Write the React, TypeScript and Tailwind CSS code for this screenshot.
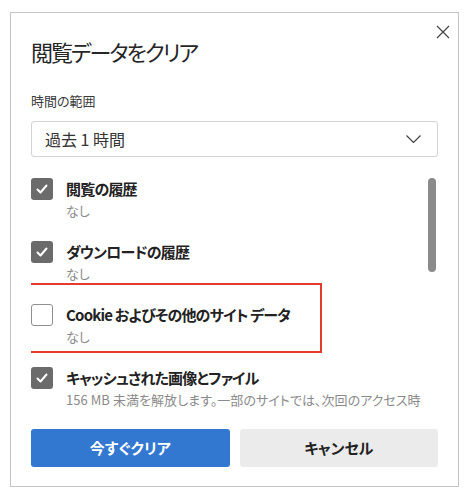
const jp = "font-['Noto_Sans_CJK_JP',sans-serif] [font-feature-settings:'palt']";

type Item = { label: string; sub: string; checked: boolean; marked?: boolean };

const items: Item[] = [
  { label: '閲覧の履歴', sub: 'なし', checked: true },
  { label: 'ダウンロードの履歴', sub: 'なし', checked: true },
  { label: 'Cookie およびその他のサイト データ', sub: 'なし', checked: false, marked: true },
  {
    label: 'キャッシュされた画像とファイル',
    sub: '156 MB 未満を解放します。一部のサイトでは、次回のアクセス時に読み込みが遅くなる可能性があります。',
    checked: true,
  },
];

function Check({ on }: { on: boolean }) {
  if (!on) {
    return <span className="block w-[22px] h-[22px] shrink-0 rounded-[3px] border border-[#8f8f8f] bg-white" />;
  }
  return (
    <span className="flex w-[22px] h-[22px] shrink-0 items-center justify-center rounded-[3px] bg-[#6b6b6b]">
      <svg width="14" height="14" viewBox="0 0 14 14" fill="none" stroke="white" strokeWidth="2" strokeLinecap="round" strokeLinejoin="round">
        <path d="M2.5 7.5l3 3 6-7" />
      </svg>
    </span>
  );
}

export default function App() {
  return (
    <div className={`min-h-[498px] bg-white pt-[12px] pl-[10px] ${jp}`}>
      <div className="relative w-[449px] h-[475px] border border-[#c4c4c4] px-[20px] pt-[24px] pb-[19px] flex flex-col">
        {/* close */}
        <button className="absolute top-[12px] right-[8px] w-[14px] h-[14px] text-[#444]" aria-label="閉じる">
          <svg width="14" height="14" viewBox="0 0 14 14" fill="none" stroke="currentColor" strokeWidth="1.2">
            <path d="M1 1l12 12M13 1L1 13" />
          </svg>
        </button>

        <h1 className="text-[22px] leading-[28px] tracking-[-2px] text-[#262626]">閲覧データをクリア</h1>

        <div className="mt-[26px] text-[13px] leading-[20px] text-[#3a3a3a]">時間の範囲</div>

        <div className="mt-[10px] h-[36px] rounded-[3px] border border-[#d3d3d3] flex items-center justify-between pl-[13px] pr-[16px]">
          <span className="text-[16px] text-[#333]">過去 1 時間</span>
          <svg width="15" height="8" viewBox="0 0 15 8" fill="none" stroke="#444" strokeWidth="1.2">
            <path d="M0.5 0.5l7 7 7-7" />
          </svg>
        </div>

        {/* list */}
        <div className="mt-[21px] flex items-start gap-[6px]">
          <div className="w-[391px] overflow-hidden flex flex-col gap-[19px]">
            {items.map((it) => (
              <div key={it.label} className="relative flex items-start gap-[13px]">
                {it.marked && (
                  <span className="absolute -left-[10px] -top-[21px] w-[301px] h-[70px] border-2 border-[#e8392e] pointer-events-none" />
                )}
                <Check on={it.checked} />
                <div className="min-w-0">
                  <div className="text-[15px] leading-[22px] tracking-[-0.8px] font-semibold text-[#222] whitespace-nowrap">{it.label}</div>
                  <div className="text-[13px] leading-[22px] tracking-[0.05px] text-[#8a8a8a] whitespace-nowrap">{it.sub}</div>
                </div>
              </div>
            ))}
          </div>
          <div className="w-[8px] h-[94px] rounded-full bg-[#8b8b8b]" />
        </div>

        <div className="mt-auto grid grid-cols-2 gap-[10px]">
          <button className="h-[38px] rounded-[3px] bg-[#3277d0] text-white text-[15px] font-semibold">今すぐクリア</button>
          <button className="h-[38px] rounded-[3px] bg-[#ebebeb] text-[#222] text-[15px] font-semibold">キャンセル</button>
        </div>
      </div>
    </div>
  );
}
